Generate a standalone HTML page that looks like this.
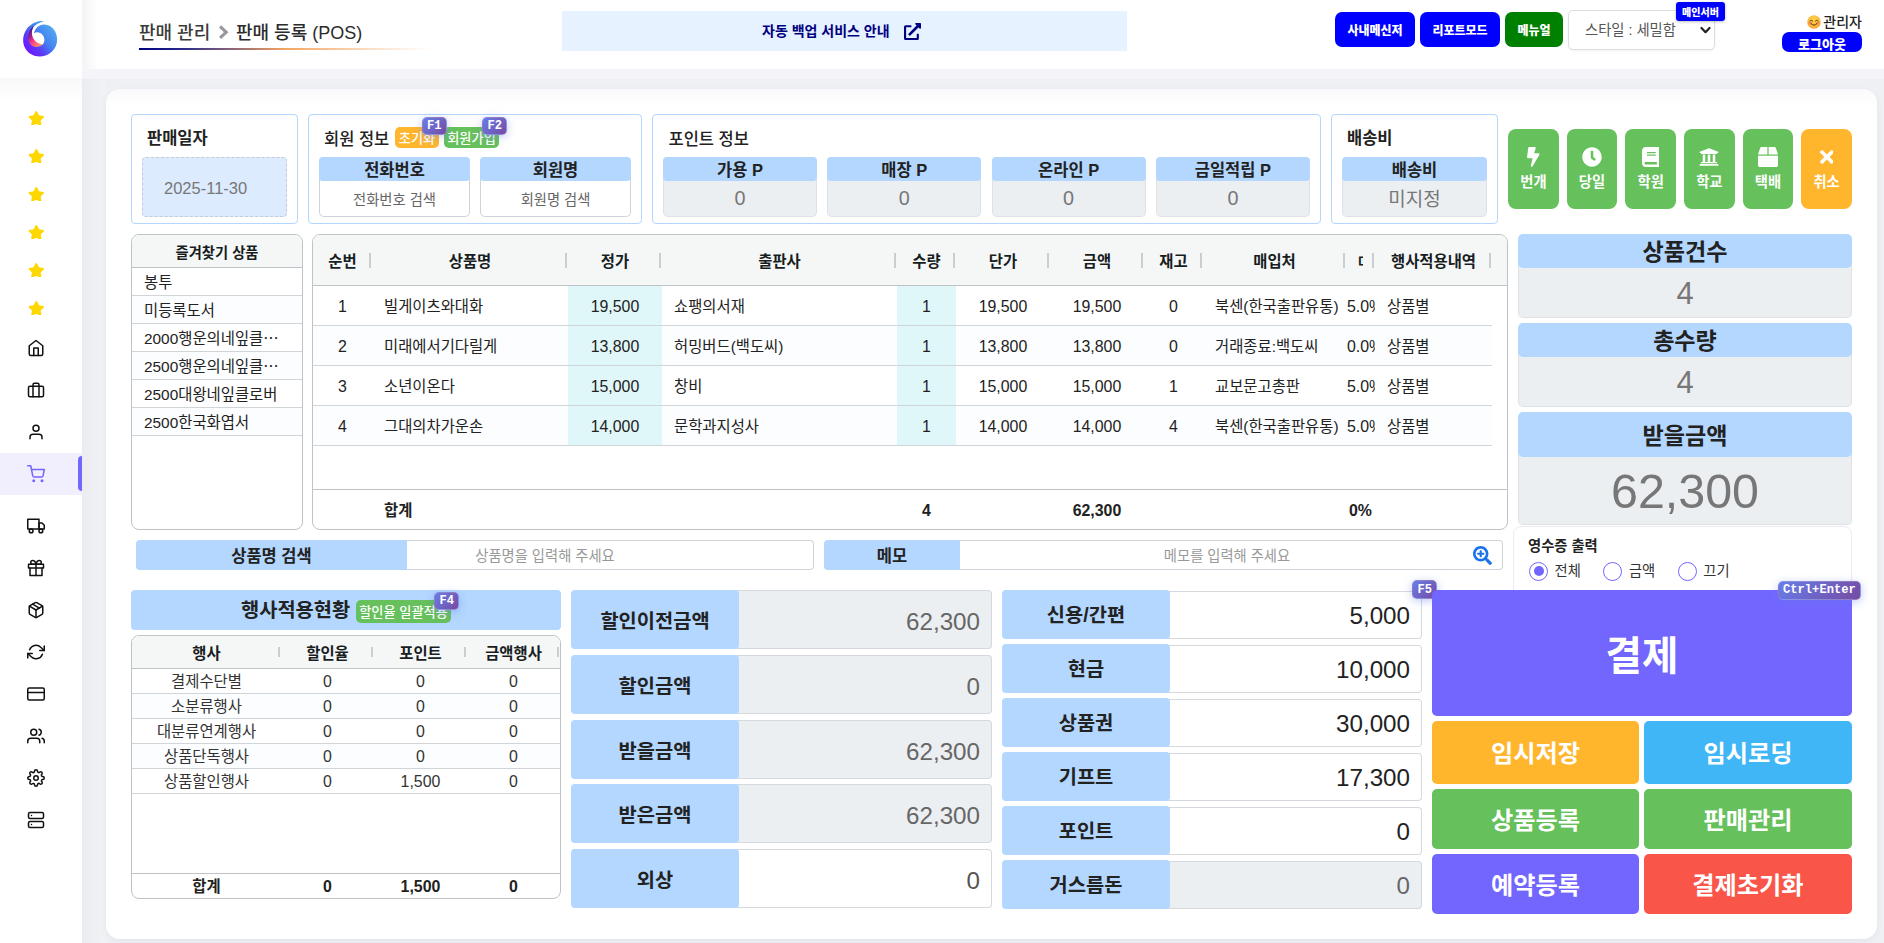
<!DOCTYPE html>
<html lang="ko"><head><meta charset="utf-8"><title>판매 등록 (POS)</title>
<style>
*{box-sizing:border-box;margin:0;padding:0}
html,body{width:1884px;height:943px;overflow:hidden}
body{position:relative;background:#eef0f4;font-family:"Liberation Sans", "Noto Sans CJK KR", sans-serif;font-size:15.4px;color:#222;-webkit-font-smoothing:antialiased}
.a{position:absolute}
.c{display:flex;align-items:center;justify-content:center;white-space:nowrap}
.b{font-weight:700}
#side{left:0;top:0;width:82px;height:943px;background:#fff}
#top{left:82px;top:0;width:1802px;height:69px;background:#fff}
#band{left:82px;top:69px;width:1802px;height:10px;background:#f4f4f9}
#card{left:106px;top:89px;width:1771px;height:850px;background:linear-gradient(180deg,#fafafc 0,#fff 18px);border-radius:14px;box-shadow:0 2px 6px rgba(90,90,130,.07)}
.ico{position:absolute;left:27px;width:18px;height:18px;fill:none;stroke:#111;stroke-width:2;stroke-linecap:round;stroke-linejoin:round}
.star{position:absolute;left:28px;width:16.600px;height:14.800px;fill:#ffd700}
.box{border:1px solid #b3d7ff;border-radius:4px;background:#fff}
.ttl{font-size:16.5px;font-weight:700;color:#222;line-height:20px;white-space:nowrap}
.fh{background:#b3d7ff;border-radius:4px;font-size:16.5px;font-weight:700;color:#222}
.fv{border:1px solid #ced4da;border-top:none;border-radius:0 0 5px 5px;background:#fff;font-size:14.3px;color:#666}
.fv.dis{background:#eceff2;border-color:#dee2e6;font-size:19.8px;color:#777}
.key{background:linear-gradient(135deg,#667eea 0%,#764ba2 100%);border:1px solid rgba(255,255,255,.22);color:#fff;font-family:"Liberation Mono", "DejaVu Sans Mono", monospace;font-weight:700;font-size:12.1px;border-radius:5px;box-shadow:0 2px 8px rgba(102,126,234,.42);letter-spacing:0}
.bdg{color:#fff;font-size:13.2px;font-weight:500;border-radius:5px}
.abtn{background:#66c05c;border-radius:8px;color:#fff}
.abtn svg{position:absolute;fill:#fff}
.abtn span{position:absolute;left:0;right:0;top:42.500px;text-align:center;font-size:14.3px;font-weight:700;line-height:20px}
.grid{border:1px solid #bdc3c7;border-radius:8px;background:#fff;overflow:hidden}
.gh{background:#f5f7f7;border-bottom:1px solid #bdc3c7}
.hl{font-weight:700;font-size:15.4px;color:#181d1f}
.sep{width:2px;background:rgba(189,195,199,.8)}
.rl{height:1px;background:#d0d5d9}
.cell{font-size:15.4px;color:#222;white-space:nowrap;overflow:hidden}
.sum .h{background:#b3d7ff;border-radius:5px;padding-bottom:2px;font-weight:700;font-size:23.1px;color:#222}
.sum .v{background:#eceff2;border:1px solid #dee2e6;border-top:none;border-radius:0 0 5px 5px;color:#777}
.pl{background:#b3d7ff;border-radius:4px;font-size:19.8px;font-weight:700;color:#222}
.pv{border:1px solid #d5d9dd;border-left:none;border-radius:0 4px 4px 0;font-size:24.2px;justify-content:flex-end;padding-right:11px;background:#fff;color:#222}
.pv.dis{background:#eceff2;color:#666}
.big{color:#fff;font-weight:700;font-size:24.2px;border-radius:5px;padding-bottom:2px}
.radio{width:19px;height:19px;border:1px solid #7366ff;border-radius:50%;background:#fff}
.tb{color:#fff;font-weight:900;font-size:12px;border-radius:7px}
</style></head>
<body>
<div id="side" class="a">
<svg class="a" style="left:15px;top:14px" width="50" height="50" viewBox="0 0 943 943">
<defs><linearGradient id="lg1" x1="0.92" y1="0.22" x2="0.2" y2="0.85"><stop offset="0" stop-color="#52aaf0"/><stop offset="0.45" stop-color="#4480f2"/><stop offset="0.75" stop-color="#5a3cf8"/><stop offset="1" stop-color="#6a1eff"/></linearGradient>
<linearGradient id="lg2" x1="0.2" y1="0" x2="0.8" y2="1"><stop offset="0" stop-color="#3a1290"/><stop offset="0.35" stop-color="#a0208a"/><stop offset="0.6" stop-color="#ff3f88"/><stop offset="1" stop-color="#ffa25a"/></linearGradient></defs>
<path d="M545,135 C440,122 300,170 215,290 C150,385 130,520 190,640 C250,750 360,805 480,800 C660,795 795,650 795,480 C795,330 690,205 560,200 C470,198 390,250 358,362 C400,335 480,340 525,400 C570,460 560,540 520,575 C470,615 390,600 340,540 C290,470 300,330 345,250 C390,190 470,160 545,135 Z" fill="url(#lg1)"/>
<path d="M338,232 C262,310 232,420 262,520 C298,625 420,665 530,568 C450,578 370,520 335,440 C308,380 312,300 348,240 Z" fill="url(#lg2)"/>
</svg>
<svg class="star" style="top:110.5px" viewBox="0 0 576 512"><path d="M259.3 17.8L194 150.2 47.9 171.5c-26.2 3.8-36.7 36.1-17.700 54.600l105.700 103-25 145.500c-4.500 26.300 23.200 46 46.400 33.700L288 439.600l130.700 68.700c23.200 12.200 50.900-7.400 46.400-33.700l-25-145.500 105.700-103c19-18.500 8.500-50.800-17.700-54.600L382 150.200 316.700 17.800c-11.700-23.600-45.600-23.900-57.400 0z"/></svg>
<svg class="star" style="top:148.5px" viewBox="0 0 576 512"><path d="M259.3 17.8L194 150.2 47.9 171.5c-26.2 3.8-36.7 36.1-17.700 54.600l105.700 103-25 145.500c-4.500 26.300 23.200 46 46.400 33.700L288 439.600l130.700 68.700c23.200 12.200 50.900-7.400 46.400-33.700l-25-145.500 105.700-103c19-18.500 8.500-50.800-17.700-54.600L382 150.200 316.700 17.800c-11.700-23.600-45.600-23.900-57.400 0z"/></svg>
<svg class="star" style="top:186.5px" viewBox="0 0 576 512"><path d="M259.3 17.8L194 150.2 47.9 171.5c-26.2 3.8-36.7 36.1-17.700 54.600l105.700 103-25 145.500c-4.500 26.300 23.200 46 46.400 33.700L288 439.600l130.700 68.700c23.200 12.200 50.900-7.400 46.400-33.700l-25-145.500 105.700-103c19-18.500 8.500-50.800-17.700-54.600L382 150.200 316.700 17.800c-11.700-23.600-45.600-23.900-57.400 0z"/></svg>
<svg class="star" style="top:224.5px" viewBox="0 0 576 512"><path d="M259.3 17.8L194 150.2 47.9 171.5c-26.2 3.8-36.7 36.1-17.700 54.600l105.700 103-25 145.500c-4.500 26.300 23.200 46 46.400 33.700L288 439.600l130.700 68.700c23.200 12.200 50.900-7.400 46.400-33.700l-25-145.500 105.700-103c19-18.500 8.500-50.800-17.700-54.600L382 150.200 316.700 17.800c-11.700-23.600-45.600-23.900-57.400 0z"/></svg>
<svg class="star" style="top:262.5px" viewBox="0 0 576 512"><path d="M259.3 17.8L194 150.2 47.9 171.5c-26.2 3.8-36.7 36.1-17.700 54.600l105.700 103-25 145.500c-4.500 26.300 23.200 46 46.400 33.700L288 439.600l130.700 68.700c23.200 12.200 50.900-7.400 46.400-33.700l-25-145.500 105.700-103c19-18.500 8.500-50.800-17.700-54.600L382 150.200 316.700 17.800c-11.700-23.600-45.600-23.900-57.400 0z"/></svg>
<svg class="star" style="top:300.5px" viewBox="0 0 576 512"><path d="M259.3 17.8L194 150.2 47.9 171.5c-26.2 3.8-36.7 36.1-17.700 54.600l105.700 103-25 145.500c-4.500 26.300 23.200 46 46.400 33.700L288 439.600l130.700 68.700c23.200 12.200 50.900-7.400 46.400-33.700l-25-145.500 105.700-103c19-18.500 8.500-50.800-17.700-54.600L382 150.200 316.700 17.800c-11.700-23.600-45.600-23.900-57.400 0z"/></svg>
<div class="a " style="left:0px;top:453px;width:82px;height:42px;background:#f1effd"></div>
<div class="a " style="left:78px;top:456px;width:4px;height:35px;background:#7366ff;border-radius:4px 0 0 4px"></div>
<svg class="ico" style="top:339px;" viewBox="0 0 24 24"><path d="M3 9l9-7 9 7v11a2 2 0 0 1-2 2H5a2 2 0 0 1-2-2z"/><polyline points="9 22 9 12 15 12 15 22"/></svg>
<svg class="ico" style="top:381px;" viewBox="0 0 24 24"><rect x="2" y="7" width="20" height="14" rx="2" ry="2"/><path d="M16 21V5a2 2 0 0 0-2-2h-4a2 2 0 0 0-2 2v16"/></svg>
<svg class="ico" style="top:423px;" viewBox="0 0 24 24"><path d="M20 21v-2a4 4 0 0 0-4-4H8a4 4 0 0 0-4 4v2"/><circle cx="12" cy="7" r="4"/></svg>
<svg class="ico" style="top:465px;stroke:#7366ff;" viewBox="0 0 24 24"><circle cx="9" cy="21" r="1"/><circle cx="20" cy="21" r="1"/><path d="M1 1h4l2.680 13.390a2 2 0 0 0 2 1.610h9.720a2 2 0 0 0 2-1.610L23 6H6"/></svg>
<svg class="ico" style="top:517px;" viewBox="0 0 24 24"><rect x="1" y="3" width="15" height="13"/><polygon points="16 8 20 8 23 11 23 16 16 16 16 8"/><circle cx="5.500" cy="18.500" r="2.500"/><circle cx="18.500" cy="18.500" r="2.500"/></svg>
<svg class="ico" style="top:559px;" viewBox="0 0 24 24"><polyline points="20 12 20 22 4 22 4 12"/><rect x="2" y="7" width="20" height="5"/><line x1="12" y1="22" x2="12" y2="7"/><path d="M12 7H7.500a2.500 2.500 0 0 1 0-5C11 2 12 7 12 7z"/><path d="M12 7h4.500a2.500 2.500 0 0 0 0-5C13 2 12 7 12 7z"/></svg>
<svg class="ico" style="top:601px;" viewBox="0 0 24 24"><line x1="16.500" y1="9.400" x2="7.500" y2="4.210"/><path d="M21 16V8a2 2 0 0 0-1-1.730l-7-4a2 2 0 0 0-2 0l-7 4A2 2 0 0 0 3 8v8a2 2 0 0 0 1 1.730l7 4a2 2 0 0 0 2 0l7-4A2 2 0 0 0 21 16z"/><polyline points="3.270 6.960 12 12.010 20.730 6.960"/><line x1="12" y1="22.080" x2="12" y2="12"/></svg>
<svg class="ico" style="top:643px;" viewBox="0 0 24 24"><polyline points="23 4 23 10 17 10"/><polyline points="1 20 1 14 7 14"/><path d="M3.510 9a9 9 0 0 1 14.850-3.360L23 10M1 14l4.640 4.360A9 9 0 0 0 20.490 15"/></svg>
<svg class="ico" style="top:685px;" viewBox="0 0 24 24"><rect x="1" y="4" width="22" height="16" rx="2" ry="2"/><line x1="1" y1="10" x2="23" y2="10"/></svg>
<svg class="ico" style="top:727px;" viewBox="0 0 24 24"><path d="M17 21v-2a4 4 0 0 0-4-4H5a4 4 0 0 0-4 4v2"/><circle cx="9" cy="7" r="4"/><path d="M23 21v-2a4 4 0 0 0-3-3.870"/><path d="M16 3.130a4 4 0 0 1 0 7.750"/></svg>
<svg class="ico" style="top:769px;" viewBox="0 0 24 24"><circle cx="12" cy="12" r="3"/><path d="M19.400 15a1.650 1.650 0 0 0 .330 1.820l.060.060a2 2 0 0 1 0 2.830 2 2 0 0 1-2.830 0l-.060-.060a1.650 1.650 0 0 0-1.820-.330 1.650 1.650 0 0 0-1 1.510V21a2 2 0 0 1-2 2 2 2 0 0 1-2-2v-.090A1.650 1.650 0 0 0 9 19.400a1.650 1.650 0 0 0-1.820.330l-.060.060a2 2 0 0 1-2.830 0 2 2 0 0 1 0-2.830l.060-.060a1.650 1.650 0 0 0 .330-1.820 1.650 1.650 0 0 0-1.510-1H3a2 2 0 0 1-2-2 2 2 0 0 1 2-2h.090A1.650 1.650 0 0 0 4.600 9a1.650 1.650 0 0 0-.330-1.820l-.060-.060a2 2 0 0 1 0-2.830 2 2 0 0 1 2.830 0l.060.060a1.650 1.650 0 0 0 1.820.330H9a1.650 1.650 0 0 0 1-1.510V3a2 2 0 0 1 2-2 2 2 0 0 1 2 2v.090a1.650 1.650 0 0 0 1 1.510 1.650 1.650 0 0 0 1.820-.330l.060-.060a2 2 0 0 1 2.830 0 2 2 0 0 1 0 2.830l-.060.060a1.650 1.650 0 0 0-.330 1.820V9a1.650 1.650 0 0 0 1.510 1H21a2 2 0 0 1 2 2 2 2 0 0 1-2 2h-.090a1.650 1.650 0 0 0-1.510 1z"/></svg>
<svg class="ico" style="top:811px;" viewBox="0 0 24 24"><rect x="2" y="2" width="20" height="8" rx="2" ry="2"/><rect x="2" y="14" width="20" height="8" rx="2" ry="2"/><line x1="6" y1="6" x2="6.010" y2="6"/><line x1="6" y1="18" x2="6.010" y2="18"/></svg>
</div>
<div id="top" class="a"></div><div id="band" class="a"></div>
<div class="a " style="left:82px;top:0px;width:16px;height:69px;background:linear-gradient(90deg,#f3f3f6,#fff)"></div>
<div class="a " style="left:0px;top:78px;width:82px;height:22px;background:linear-gradient(180deg,#f8f8fa,#fff)"></div>
<div class="a" style="left:139px;top:18.500px;height:28px;line-height:28px;font-size:18px;font-weight:500;color:#3a3a3a;white-space:nowrap">판매 관리</div>
<svg class="a" style="left:217px;top:24px" width="13" height="17" viewBox="0 0 13 17"><path d="M3.100 2.500 L9.200 8.200 L3.100 13.900" fill="none" stroke="#999" stroke-width="3.100" stroke-linejoin="miter" stroke-linecap="butt"/></svg>
<div class="a" style="left:236px;top:18.500px;height:28px;line-height:28px;font-size:18px;font-weight:500;color:#2b2b2b;white-space:nowrap">판매 등록 (POS)</div>
<div class="a " style="left:139px;top:48px;width:292px;height:2px;background:linear-gradient(90deg,#000080 0%,#2a2a8c 15%,#f4a460 50%,rgba(244,164,96,.35) 80%,rgba(244,164,96,0) 100%)"></div>
<div class="a " style="left:562px;top:11px;width:565px;height:40px;background:#e6f2ff"></div>
<div class="a b" style="left:762px;top:21px;line-height:20px;font-size:14px;color:#000080;white-space:nowrap">자동 백업 서비스 안내</div>
<svg class="a" style="left:904px;top:23px;fill:#000080" width="17" height="17" viewBox="0 0 512 512"><path d="M432,320H400a16,16,0,0,0-16,16V448H64V128H208a16,16,0,0,0,16-16V80a16,16,0,0,0-16-16H48A48,48,0,0,0,0,112V464a48,48,0,0,0,48,48H400a48,48,0,0,0,48-48V336A16,16,0,0,0,432,320ZM488,0h-128c-21.370,0-32.050,25.910-17,41l35.730,35.730L135,320.370a24,24,0,0,0,0,34L157.670,377a24,24,0,0,0,34,0L435.280,133.320,471,169c15,15,41,4.500,41-17V24A24,24,0,0,0,488,0Z"/></svg>
<div class="a c tb" style="left:1335px;top:12px;width:80px;height:35px;background:#0000ff">사내메신저</div>
<div class="a c tb" style="left:1420px;top:12px;width:80px;height:35px;background:#0000ff">리포트모드</div>
<div class="a c tb" style="left:1505px;top:12px;width:58px;height:35px;background:#008000">메뉴얼</div>
<div class="a " style="left:1568px;top:10px;width:147px;height:40px;border:1px solid #ddd;border-radius:5px;background:#fff;box-shadow:0 1px 3px rgba(0,0,0,.06)"></div>
<div class="a" style="left:1585px;top:19px;line-height:22px;font-size:14.3px;color:#555;white-space:nowrap">스타일 : 세밀함</div>
<svg class="a" style="left:1700px;top:26px" width="11" height="9" viewBox="0 0 11 9"><path d="M1.500 2 L5.500 6.200 L9.500 2" fill="none" stroke="#222" stroke-width="2.200" stroke-linecap="round" stroke-linejoin="round"/></svg>
<div class="a c" style="left:1676px;top:2px;width:49px;height:19px;background:#0000ff;color:#fff;font-size:10px;font-weight:900;border-radius:3px;box-shadow:0 1px 3px rgba(0,0,0,.25)">메인서버</div>
<div class="a" style="right:22px;top:12px;line-height:20px;font-size:14px;font-weight:500;color:#222;white-space:nowrap"><svg style="vertical-align:-2px;margin-right:2.500px" width="14" height="14" viewBox="0 0 14 14"><defs><radialGradient id="em" cx="0.5" cy="0.35" r="0.75"><stop offset="0" stop-color="#ffd64a"/><stop offset="0.7" stop-color="#fbb03b"/><stop offset="1" stop-color="#f2902c"/></radialGradient></defs><circle cx="7" cy="7" r="6.800" fill="url(#em)"/><ellipse cx="3.300" cy="8.300" rx="1.700" ry="1.200" fill="#f4745c" opacity=".7"/><ellipse cx="10.700" cy="8.300" rx="1.700" ry="1.200" fill="#f4745c" opacity=".7"/><path d="M2.900 6 Q4.300 4.300 5.700 6 M8.300 6 Q9.700 4.300 11.100 6" fill="none" stroke="#5b3a12" stroke-width="1" stroke-linecap="round"/><path d="M4 8.600 Q7 11.800 10 8.600" fill="none" stroke="#5b3a12" stroke-width="1" stroke-linecap="round"/></svg>관리자</div>
<div class="a c" style="left:1782px;top:32px;width:80px;height:20px;background:#0000ff;color:#fff;font-size:13px;font-weight:900;border-radius:7px;padding-top:3px">로그아웃</div>
<div class="a " style="left:82px;top:79px;width:24px;height:864px;background:linear-gradient(90deg,#ebecf0,#f1f2f5)"></div>
<div id="card" class="a"></div>
<div class="a box" style="left:131px;top:114px;width:167px;height:110px;"></div>
<div class="a ttl" style="left:147px;top:128px">판매일자</div>
<div class="a " style="left:142px;top:157px;width:145px;height:60px;background:#ddebfe;border:1px dashed #c6cbd3;border-radius:4px"></div>
<div class="a" style="left:164px;top:178px;line-height:20px;font-size:16.5px;color:#777">2025-11-30</div>
<div class="a box" style="left:308px;top:114px;width:334px;height:110px;"></div>
<div class="a ttl" style="left:324px;top:128.500px;font-weight:500">회원 정보</div>
<div class="a c bdg" style="left:395px;top:127px;width:44px;height:21px;background:#ffb52c">초기화</div>
<div class="a c bdg" style="left:444px;top:127px;width:55px;height:21px;background:#66c05c">회원가입</div>
<div class="a c key" style="left:421.5px;top:117px;width:25.3px;height:18.3px;">F1</div>
<div class="a c key" style="left:482px;top:117px;width:25.3px;height:18.3px;">F2</div>
<div class="a c fv" style="left:319px;top:176px;width:151px;height:41px;padding-top:5px;">전화번호 검색</div>
<div class="a c fh" style="left:319px;top:157px;width:151px;height:24px;">전화번호</div>
<div class="a c fv" style="left:480px;top:176px;width:151px;height:41px;padding-top:5px;">회원명 검색</div>
<div class="a c fh" style="left:480px;top:157px;width:151px;height:24px;">회원명</div>
<div class="a box" style="left:652px;top:114px;width:669px;height:110px;"></div>
<div class="a ttl" style="left:668.500px;top:128.500px;font-weight:500">포인트 정보</div>
<div class="a c fv dis" style="left:663px;top:176px;width:154px;height:41px;padding-top:5px;">0</div>
<div class="a c fh" style="left:663px;top:157px;width:154px;height:24px;">가용 P</div>
<div class="a c fv dis" style="left:827.3px;top:176px;width:154px;height:41px;padding-top:5px;">0</div>
<div class="a c fh" style="left:827.3px;top:157px;width:154px;height:24px;">매장 P</div>
<div class="a c fv dis" style="left:991.6px;top:176px;width:154px;height:41px;padding-top:5px;">0</div>
<div class="a c fh" style="left:991.6px;top:157px;width:154px;height:24px;">온라인 P</div>
<div class="a c fv dis" style="left:1155.9px;top:176px;width:154px;height:41px;padding-top:5px;">0</div>
<div class="a c fh" style="left:1155.9px;top:157px;width:154px;height:24px;">금일적립 P</div>
<div class="a box" style="left:1331px;top:114px;width:167px;height:110px;"></div>
<div class="a ttl" style="left:1347px;top:128px">배송비</div>
<div class="a c fv dis" style="left:1342px;top:176px;width:145px;height:41px;padding-top:5px;font-size:19px;padding-top:3px">미지정</div>
<div class="a c fh" style="left:1342px;top:157px;width:145px;height:24px;">배송비</div>
<div class="a abtn" style="left:1508px;top:129px;width:50.800px;height:80px;background:#66c05c"><svg style="left:19.1px;top:18px" width="12.5" height="20" viewBox="0 0 320 512"><path d="M296 160H180.600l42.600-129.800C227.200 15 215.700 0 200 0H56C44 0 33.800 8.900 32.200 20.800l-32 240C-1.700 275.200 9.500 288 24 288h118.700L96.600 482.500c-3.600 15.200 8 29.500 23.300 29.500 8.400 0 16.400-4.400 20.800-12l176-304c9.300-15.900-2.200-36-20.700-36z"/></svg><span>번개</span></div>
<div class="a abtn" style="left:1566.64px;top:129px;width:50.800px;height:80px;background:#66c05c"><svg style="left:15.35px;top:18px" width="20" height="20" viewBox="0 0 512 512"><path d="M256,8C119,8,8,119,8,256S119,504,256,504,504,393,504,256,393,8,256,8Zm92.490,313h0l-20,25a16,16,0,0,1-22.490,2.500h0l-67-49.720a40,40,0,0,1-15-31.230V112a16,16,0,0,1,16-16h32a16,16,0,0,1,16,16V256l58,42.500A16,16,0,0,1,348.490,321Z"/></svg><span>당일</span></div>
<div class="a abtn" style="left:1625.28px;top:129px;width:50.800px;height:80px;background:#66c05c"><svg style="left:16.6px;top:18px" width="17.5" height="20" viewBox="0 0 448 512"><path d="M448 360V24c0-13.300-10.700-24-24-24H96C43 0 0 43 0 96v320c0 53 43 96 96 96h328c13.300 0 24-10.700 24-24v-16c0-7.500-3.500-14.300-8.900-18.700-4.200-15.400-4.200-59.300 0-74.700 5.400-4.300 8.900-11.100 8.900-18.600zM128 134c0-3.300 2.700-6 6-6h212c3.300 0 6 2.700 6 6v20c0 3.300-2.700 6-6 6H134c-3.300 0-6-2.700-6-6v-20zm0 64c0-3.300 2.700-6 6-6h212c3.300 0 6 2.700 6 6v20c0 3.300-2.700 6-6 6H134c-3.300 0-6-2.700-6-6v-20zm253.400 250H96c-17.700 0-32-14.300-32-32 0-17.600 14.400-32 32-32h285.400c-1.900 17.100-1.900 46.900 0 64z"/></svg><span>학원</span></div>
<div class="a abtn" style="left:1683.92px;top:129px;width:50.800px;height:80px;background:#66c05c"><svg style="left:15.35px;top:18px" width="20" height="20" viewBox="0 0 512 512"><path d="M496 128v16a8 8 0 0 1-8 8h-24v12c0 6.627-5.373 12-12 12H60c-6.627 0-12-5.373-12-12v-12H24a8 8 0 0 1-8-8v-16a8 8 0 0 1 4.941-7.392l232-88a7.996 7.996 0 0 1 6.118 0l232 88A8 8 0 0 1 496 128zm-24 304H40c-13.255 0-24 10.745-24 24v16a8 8 0 0 0 8 8h464a8 8 0 0 0 8-8v-16c0-13.255-10.745-24-24-24zM96 192v192H60c-6.627 0-12 5.373-12 12v20h416v-20c0-6.627-5.373-12-12-12h-36V192h-64v192h-64V192h-64v192h-64V192H96z"/></svg><span>학교</span></div>
<div class="a abtn" style="left:1742.56px;top:129px;width:50.800px;height:80px;background:#66c05c"><svg style="left:15.35px;top:18px" width="20" height="20" viewBox="0 0 512 512"><path d="M509.500 184.600L458.900 32.800C452.400 13.200 434.100 0 413.400 0H272v192h238.700c-.4-2.500-.4-5-1.200-7.400zM240 0H98.600c-20.700 0-39 13.200-45.500 32.800L2.500 184.600c-.8 2.400-.8 4.900-1.200 7.400H240V0zM0 224v240c0 26.500 21.500 48 48 48h416c26.500 0 48-21.500 48-48V224H0z"/></svg><span>택배</span></div>
<div class="a abtn" style="left:1801.2px;top:129px;width:50.800px;height:80px;background:#ffb52c"><svg style="left:18.475px;top:18px" width="13.75" height="20" viewBox="0 0 352 512"><path d="M242.720 256l100.070-100.070c12.280-12.280 12.280-32.190 0-44.480l-22.240-22.240c-12.280-12.280-32.190-12.280-44.480 0L176 189.280 75.930 89.210c-12.280-12.280-32.190-12.280-44.480 0L9.210 111.450c-12.280 12.280-12.280 32.190 0 44.480L109.280 256 9.210 356.070c-12.280 12.280-12.280 32.190 0 44.480l22.240 22.240c12.280 12.280 32.200 12.280 44.480 0L176 322.720l100.070 100.070c12.280 12.280 32.200 12.280 44.480 0l22.240-22.240c12.280-12.280 12.280-32.190 0-44.480L242.720 256z"/></svg><span>취소</span></div>
<div class="a grid" style="left:131px;top:234px;width:172px;height:296px">
<div class="a gh c hl" style="left:0px;top:0px;width:170px;height:33px;font-size:14.3px">즐겨찾기 상품</div>
<div class="a cell" style="left:0px;top:33px;width:170px;height:28px;background:#fff;border-bottom:1px solid #d0d5d9;padding-left:12px;line-height:29px">봉투</div>
<div class="a cell" style="left:0px;top:61px;width:170px;height:28px;background:#fcfdfe;border-bottom:1px solid #d0d5d9;padding-left:12px;line-height:29px">미등록도서</div>
<div class="a cell" style="left:0px;top:89px;width:170px;height:28px;background:#fff;border-bottom:1px solid #d0d5d9;padding-left:12px;line-height:29px">2000행운의네잎클⋯</div>
<div class="a cell" style="left:0px;top:117px;width:170px;height:28px;background:#fcfdfe;border-bottom:1px solid #d0d5d9;padding-left:12px;line-height:29px">2500행운의네잎클⋯</div>
<div class="a cell" style="left:0px;top:145px;width:170px;height:28px;background:#fff;border-bottom:1px solid #d0d5d9;padding-left:12px;line-height:29px">2500대왕네잎클로버</div>
<div class="a cell" style="left:0px;top:173px;width:170px;height:28px;background:#fcfdfe;border-bottom:1px solid #d0d5d9;padding-left:12px;line-height:29px">2500한국화엽서</div>
</div>
<div class="a grid" style="left:312px;top:234px;width:1196px;height:296px">
<div class="a gh" style="left:0px;top:0px;width:1194px;height:51px;"></div>
<div class="a hl c" style="left:0px;top:0px;width:59px;height:50px;">순번</div>
<div class="a sep" style="left:56px;top:18px;width:2px;height:15px;"></div>
<div class="a hl c" style="left:59px;top:0px;width:196px;height:50px;">상품명</div>
<div class="a sep" style="left:252px;top:18px;width:2px;height:15px;"></div>
<div class="a hl c" style="left:255px;top:0px;width:94px;height:50px;">정가</div>
<div class="a sep" style="left:346px;top:18px;width:2px;height:15px;"></div>
<div class="a hl c" style="left:349px;top:0px;width:235px;height:50px;">출판사</div>
<div class="a sep" style="left:581px;top:18px;width:2px;height:15px;"></div>
<div class="a hl c" style="left:584px;top:0px;width:59px;height:50px;">수량</div>
<div class="a sep" style="left:640px;top:18px;width:2px;height:15px;"></div>
<div class="a hl c" style="left:643px;top:0px;width:94px;height:50px;">단가</div>
<div class="a sep" style="left:734px;top:18px;width:2px;height:15px;"></div>
<div class="a hl c" style="left:737px;top:0px;width:94px;height:50px;">금액</div>
<div class="a sep" style="left:828px;top:18px;width:2px;height:15px;"></div>
<div class="a hl c" style="left:831px;top:0px;width:59px;height:50px;">재고</div>
<div class="a sep" style="left:887px;top:18px;width:2px;height:15px;"></div>
<div class="a hl c" style="left:890px;top:0px;width:143px;height:50px;">매입처</div>
<div class="a sep" style="left:1030px;top:18px;width:2px;height:15px;"></div>
<div class="a hl" style="left:1045px;top:0px;width:5px;height:50px;line-height:55px;font-size:14px;overflow:hidden;white-space:nowrap">마진</div>
<div class="a sep" style="left:1059px;top:18px;width:2px;height:15px;"></div>
<div class="a hl c" style="left:1062px;top:0px;width:117px;height:50px;">행사적용내역</div>
<div class="a sep" style="left:1176px;top:18px;width:2px;height:15px;"></div>
<div class="a " style="left:0px;top:51px;width:1179px;height:39px;background:#fff"></div>
<div class="a rl" style="left:0px;top:90px;width:1179px;height:1px;"></div>
<div class="a cell" style="left:0px;top:51px;width:59px;height:39px;line-height:41px;text-align:center;font-size:15.9px;">1</div>
<div class="a cell" style="left:59px;top:51px;width:196px;height:39px;line-height:41px;padding-left:12px;">빌게이츠와대화</div>
<div class="a cell" style="left:255px;top:51px;width:94px;height:39px;line-height:41px;background:#e0f7fa;text-align:center;font-size:15.9px;">19,500</div>
<div class="a cell" style="left:349px;top:51px;width:235px;height:39px;line-height:41px;padding-left:12px;">쇼팽의서재</div>
<div class="a cell" style="left:584px;top:51px;width:59px;height:39px;line-height:41px;background:#e0f7fa;text-align:center;font-size:15.9px;">1</div>
<div class="a cell" style="left:643px;top:51px;width:94px;height:39px;line-height:41px;text-align:center;font-size:15.9px;">19,500</div>
<div class="a cell" style="left:737px;top:51px;width:94px;height:39px;line-height:41px;text-align:center;font-size:15.9px;">19,500</div>
<div class="a cell" style="left:831px;top:51px;width:59px;height:39px;line-height:41px;text-align:center;font-size:15.9px;">0</div>
<div class="a cell" style="left:890px;top:51px;width:143px;height:39px;line-height:41px;padding-left:12px;">북센(한국출판유통)</div>
<div class="a cell" style="left:1033px;top:51px;width:29px;height:39px;line-height:41px;text-align:center;padding-left:1px;font-size:15.9px;">5.0%</div>
<div class="a cell" style="left:1062px;top:51px;width:117px;height:39px;line-height:41px;padding-left:12px;">상품별</div>
<div class="a " style="left:0px;top:91px;width:1179px;height:39px;background:#fcfdfe"></div>
<div class="a rl" style="left:0px;top:130px;width:1179px;height:1px;"></div>
<div class="a cell" style="left:0px;top:91px;width:59px;height:39px;line-height:41px;text-align:center;font-size:15.9px;">2</div>
<div class="a cell" style="left:59px;top:91px;width:196px;height:39px;line-height:41px;padding-left:12px;">미래에서기다릴게</div>
<div class="a cell" style="left:255px;top:91px;width:94px;height:39px;line-height:41px;background:#e0f7fa;text-align:center;font-size:15.9px;">13,800</div>
<div class="a cell" style="left:349px;top:91px;width:235px;height:39px;line-height:41px;padding-left:12px;">허밍버드(백도씨)</div>
<div class="a cell" style="left:584px;top:91px;width:59px;height:39px;line-height:41px;background:#e0f7fa;text-align:center;font-size:15.9px;">1</div>
<div class="a cell" style="left:643px;top:91px;width:94px;height:39px;line-height:41px;text-align:center;font-size:15.9px;">13,800</div>
<div class="a cell" style="left:737px;top:91px;width:94px;height:39px;line-height:41px;text-align:center;font-size:15.9px;">13,800</div>
<div class="a cell" style="left:831px;top:91px;width:59px;height:39px;line-height:41px;text-align:center;font-size:15.9px;">0</div>
<div class="a cell" style="left:890px;top:91px;width:143px;height:39px;line-height:41px;padding-left:12px;">거래종료:백도씨</div>
<div class="a cell" style="left:1033px;top:91px;width:29px;height:39px;line-height:41px;text-align:center;padding-left:1px;font-size:15.9px;">0.0%</div>
<div class="a cell" style="left:1062px;top:91px;width:117px;height:39px;line-height:41px;padding-left:12px;">상품별</div>
<div class="a " style="left:0px;top:131px;width:1179px;height:39px;background:#fff"></div>
<div class="a rl" style="left:0px;top:170px;width:1179px;height:1px;"></div>
<div class="a cell" style="left:0px;top:131px;width:59px;height:39px;line-height:41px;text-align:center;font-size:15.9px;">3</div>
<div class="a cell" style="left:59px;top:131px;width:196px;height:39px;line-height:41px;padding-left:12px;">소년이온다</div>
<div class="a cell" style="left:255px;top:131px;width:94px;height:39px;line-height:41px;background:#e0f7fa;text-align:center;font-size:15.9px;">15,000</div>
<div class="a cell" style="left:349px;top:131px;width:235px;height:39px;line-height:41px;padding-left:12px;">창비</div>
<div class="a cell" style="left:584px;top:131px;width:59px;height:39px;line-height:41px;background:#e0f7fa;text-align:center;font-size:15.9px;">1</div>
<div class="a cell" style="left:643px;top:131px;width:94px;height:39px;line-height:41px;text-align:center;font-size:15.9px;">15,000</div>
<div class="a cell" style="left:737px;top:131px;width:94px;height:39px;line-height:41px;text-align:center;font-size:15.9px;">15,000</div>
<div class="a cell" style="left:831px;top:131px;width:59px;height:39px;line-height:41px;text-align:center;font-size:15.9px;">1</div>
<div class="a cell" style="left:890px;top:131px;width:143px;height:39px;line-height:41px;padding-left:12px;">교보문고총판</div>
<div class="a cell" style="left:1033px;top:131px;width:29px;height:39px;line-height:41px;text-align:center;padding-left:1px;font-size:15.9px;">5.0%</div>
<div class="a cell" style="left:1062px;top:131px;width:117px;height:39px;line-height:41px;padding-left:12px;">상품별</div>
<div class="a " style="left:0px;top:171px;width:1179px;height:39px;background:#fcfdfe"></div>
<div class="a rl" style="left:0px;top:210px;width:1179px;height:1px;"></div>
<div class="a cell" style="left:0px;top:171px;width:59px;height:39px;line-height:41px;text-align:center;font-size:15.9px;">4</div>
<div class="a cell" style="left:59px;top:171px;width:196px;height:39px;line-height:41px;padding-left:12px;">그대의차가운손</div>
<div class="a cell" style="left:255px;top:171px;width:94px;height:39px;line-height:41px;background:#e0f7fa;text-align:center;font-size:15.9px;">14,000</div>
<div class="a cell" style="left:349px;top:171px;width:235px;height:39px;line-height:41px;padding-left:12px;">문학과지성사</div>
<div class="a cell" style="left:584px;top:171px;width:59px;height:39px;line-height:41px;background:#e0f7fa;text-align:center;font-size:15.9px;">1</div>
<div class="a cell" style="left:643px;top:171px;width:94px;height:39px;line-height:41px;text-align:center;font-size:15.9px;">14,000</div>
<div class="a cell" style="left:737px;top:171px;width:94px;height:39px;line-height:41px;text-align:center;font-size:15.9px;">14,000</div>
<div class="a cell" style="left:831px;top:171px;width:59px;height:39px;line-height:41px;text-align:center;font-size:15.9px;">4</div>
<div class="a cell" style="left:890px;top:171px;width:143px;height:39px;line-height:41px;padding-left:12px;">북센(한국출판유통)</div>
<div class="a cell" style="left:1033px;top:171px;width:29px;height:39px;line-height:41px;text-align:center;padding-left:1px;font-size:15.9px;">5.0%</div>
<div class="a cell" style="left:1062px;top:171px;width:117px;height:39px;line-height:41px;padding-left:12px;">상품별</div>
<div class="a " style="left:0px;top:254px;width:1194px;height:1px;background:#bdc3c7"></div>
<div class="a cell" style="left:59px;top:255px;width:196px;height:39px;line-height:42px;font-weight:700;padding-left:12px;">합계</div>
<div class="a cell" style="left:584px;top:255px;width:59px;height:39px;line-height:42px;font-weight:700;font-size:15.9px;text-align:center;">4</div>
<div class="a cell" style="left:737px;top:255px;width:94px;height:39px;line-height:42px;font-weight:700;font-size:15.9px;text-align:center;">62,300</div>
<div class="a cell" style="left:1033px;top:255px;width:29px;height:39px;line-height:42px;font-weight:700;font-size:15.9px;text-align:center;">0%</div>
</div>
<div class="sum"><div class="a c v" style="left:1518px;top:263px;width:334px;height:55px;font-size:31px;padding-top:8px">4</div><div class="a c h" style="left:1518px;top:234px;width:334px;height:34px;">상품건수</div></div>
<div class="sum"><div class="a c v" style="left:1518px;top:352px;width:334px;height:55px;font-size:31px;padding-top:8px">4</div><div class="a c h" style="left:1518px;top:323px;width:334px;height:34px;">총수량</div></div>
<div class="sum"><div class="a c v" style="left:1518px;top:452px;width:334px;height:73px;font-size:48.4px;padding-top:5px">62,300</div><div class="a c h" style="left:1518px;top:412px;width:334px;height:45px;">받을금액</div></div>
<div class="a " style="left:1513px;top:526px;width:339px;height:80px;background:#fff;border:1px solid #ececf0;border-radius:8px"></div>
<div class="a b" style="left:1528px;top:537px;line-height:19px;font-size:14.3px;color:#222;white-space:nowrap">영수증 출력</div>
<div class="a radio" style="left:1529px;top:561.5px;width:19px;height:19px;"></div>
<div class="a " style="left:1533.5px;top:566px;width:10px;height:10px;background:#7366ff;border-radius:50%"></div>
<div class="a" style="left:1554.5px;top:562px;line-height:19px;font-size:14.3px;color:#333;white-space:nowrap">전체</div>
<div class="a radio" style="left:1603.4px;top:561.5px;width:19px;height:19px;"></div>
<div class="a" style="left:1628.9px;top:562px;line-height:19px;font-size:14.3px;color:#333;white-space:nowrap">금액</div>
<div class="a radio" style="left:1677.8px;top:561.5px;width:19px;height:19px;"></div>
<div class="a" style="left:1703.3px;top:562px;line-height:19px;font-size:14.3px;color:#333;white-space:nowrap">끄기</div>
<div class="a c" style="left:136px;top:540px;width:271px;height:30px;background:#b3d7ff;border-radius:4px 0 0 4px;font-size:16.5px;font-weight:700">상품명 검색</div>
<div class="a c" style="left:407px;top:540px;width:407px;height:30px;border:1px solid #ced4da;border-left:none;border-radius:0 4px 4px 0;font-size:14.3px;color:#999;padding-right:130px;padding-bottom:2px">상품명을 입력해 주세요</div>
<div class="a c" style="left:824px;top:540px;width:136px;height:30px;background:#b3d7ff;border-radius:4px 0 0 4px;font-size:16.5px;font-weight:700">메모</div>
<div class="a c" style="left:960px;top:540px;width:543px;height:30px;border:1px solid #ced4da;border-left:none;border-radius:0 4px 4px 0;font-size:14.3px;color:#999;padding-right:8px;padding-bottom:2px">메모를 입력해 주세요</div>
<svg class="a" style="left:1473px;top:546px;fill:#1a73e8" width="19" height="19" viewBox="0 0 512 512"><path d="M304 192v32c0 6.600-5.400 12-12 12h-56v56c0 6.600-5.400 12-12 12h-32c-6.600 0-12-5.400-12-12v-56h-56c-6.600 0-12-5.400-12-12v-32c0-6.600 5.400-12 12-12h56v-56c0-6.600 5.400-12 12-12h32c6.600 0 12 5.400 12 12v56h56c6.600 0 12 5.400 12 12zm201 284.700L476.700 505c-9.400 9.400-24.600 9.400-33.900 0L343 405.300c-4.500-4.500-7-10.600-7-17V372c-35.300 27.600-79.700 44-128 44C93.100 416 0 322.900 0 208S93.100 0 208 0s208 93.100 208 208c0 48.300-16.400 92.700-44 128h16.300c6.400 0 12.500 2.500 17 7l99.700 99.700c9.300 9.400 9.300 24.600 0 34zM344 208c0-75.200-60.800-136-136-136S72 132.800 72 208s60.800 136 136 136 136-60.800 136-136z"/></svg>
<div class="a " style="left:131px;top:590px;width:430px;height:40px;background:#b3d7ff;border-radius:4px"></div>
<div class="a b" style="left:241px;top:597px;line-height:26px;font-size:19.8px;color:#222;white-space:nowrap">행사적용현황</div>
<div class="a c bdg" style="left:356px;top:600px;width:95px;height:23px;background:#66c05c">할인율 일괄적용</div>
<div class="a c key" style="left:434px;top:591.5px;width:25.3px;height:18px;">F4</div>
<div class="a grid" style="left:131px;top:635px;width:430px;height:264px">
<div class="a gh" style="left:0px;top:0px;width:428px;height:33px;"></div>
<div class="a hl c" style="left:0px;top:0px;width:149px;height:32px;">행사</div>
<div class="a sep" style="left:146px;top:11px;width:2px;height:10px;"></div>
<div class="a hl c" style="left:149px;top:0px;width:93px;height:32px;">할인율</div>
<div class="a sep" style="left:239px;top:11px;width:2px;height:10px;"></div>
<div class="a hl c" style="left:242px;top:0px;width:93px;height:32px;">포인트</div>
<div class="a sep" style="left:332px;top:11px;width:2px;height:10px;"></div>
<div class="a hl c" style="left:335px;top:0px;width:93px;height:32px;">금액행사</div>
<div class="a sep" style="left:425px;top:11px;width:2px;height:10px;"></div>
<div class="a " style="left:0px;top:33px;width:428px;height:24px;background:#fff"></div>
<div class="a rl" style="left:0px;top:57px;width:428px;height:1px;"></div>
<div class="a cell" style="left:0px;top:33px;width:149px;height:24px;line-height:25px;text-align:center;color:#333">결제수단별</div>
<div class="a cell" style="left:149px;top:33px;width:93px;height:24px;line-height:25px;text-align:center;color:#333;font-size:15.9px">0</div>
<div class="a cell" style="left:242px;top:33px;width:93px;height:24px;line-height:25px;text-align:center;color:#333;font-size:15.9px">0</div>
<div class="a cell" style="left:335px;top:33px;width:93px;height:24px;line-height:25px;text-align:center;color:#333;font-size:15.9px">0</div>
<div class="a " style="left:0px;top:58px;width:428px;height:24px;background:#fcfdfe"></div>
<div class="a rl" style="left:0px;top:82px;width:428px;height:1px;"></div>
<div class="a cell" style="left:0px;top:58px;width:149px;height:24px;line-height:25px;text-align:center;color:#333">소분류행사</div>
<div class="a cell" style="left:149px;top:58px;width:93px;height:24px;line-height:25px;text-align:center;color:#333;font-size:15.9px">0</div>
<div class="a cell" style="left:242px;top:58px;width:93px;height:24px;line-height:25px;text-align:center;color:#333;font-size:15.9px">0</div>
<div class="a cell" style="left:335px;top:58px;width:93px;height:24px;line-height:25px;text-align:center;color:#333;font-size:15.9px">0</div>
<div class="a " style="left:0px;top:83px;width:428px;height:24px;background:#fff"></div>
<div class="a rl" style="left:0px;top:107px;width:428px;height:1px;"></div>
<div class="a cell" style="left:0px;top:83px;width:149px;height:24px;line-height:25px;text-align:center;color:#333">대분류연계행사</div>
<div class="a cell" style="left:149px;top:83px;width:93px;height:24px;line-height:25px;text-align:center;color:#333;font-size:15.9px">0</div>
<div class="a cell" style="left:242px;top:83px;width:93px;height:24px;line-height:25px;text-align:center;color:#333;font-size:15.9px">0</div>
<div class="a cell" style="left:335px;top:83px;width:93px;height:24px;line-height:25px;text-align:center;color:#333;font-size:15.9px">0</div>
<div class="a " style="left:0px;top:108px;width:428px;height:24px;background:#fcfdfe"></div>
<div class="a rl" style="left:0px;top:132px;width:428px;height:1px;"></div>
<div class="a cell" style="left:0px;top:108px;width:149px;height:24px;line-height:25px;text-align:center;color:#333">상품단독행사</div>
<div class="a cell" style="left:149px;top:108px;width:93px;height:24px;line-height:25px;text-align:center;color:#333;font-size:15.9px">0</div>
<div class="a cell" style="left:242px;top:108px;width:93px;height:24px;line-height:25px;text-align:center;color:#333;font-size:15.9px">0</div>
<div class="a cell" style="left:335px;top:108px;width:93px;height:24px;line-height:25px;text-align:center;color:#333;font-size:15.9px">0</div>
<div class="a " style="left:0px;top:133px;width:428px;height:24px;background:#fff"></div>
<div class="a rl" style="left:0px;top:157px;width:428px;height:1px;"></div>
<div class="a cell" style="left:0px;top:133px;width:149px;height:24px;line-height:25px;text-align:center;color:#333">상품할인행사</div>
<div class="a cell" style="left:149px;top:133px;width:93px;height:24px;line-height:25px;text-align:center;color:#333;font-size:15.9px">0</div>
<div class="a cell" style="left:242px;top:133px;width:93px;height:24px;line-height:25px;text-align:center;color:#333;font-size:15.9px">1,500</div>
<div class="a cell" style="left:335px;top:133px;width:93px;height:24px;line-height:25px;text-align:center;color:#333;font-size:15.9px">0</div>
<div class="a " style="left:0px;top:237px;width:428px;height:1px;background:#bdc3c7"></div>
<div class="a cell" style="left:0px;top:238px;width:149px;height:24px;line-height:26px;text-align:center;font-weight:700">합계</div>
<div class="a cell" style="left:149px;top:238px;width:93px;height:24px;line-height:26px;text-align:center;font-weight:700;font-size:15.9px">0</div>
<div class="a cell" style="left:242px;top:238px;width:93px;height:24px;line-height:26px;text-align:center;font-weight:700;font-size:15.9px">1,500</div>
<div class="a cell" style="left:335px;top:238px;width:93px;height:24px;line-height:26px;text-align:center;font-weight:700;font-size:15.9px">0</div>
</div>
<div class="a c pv dis" style="left:737px;top:590.4px;width:255px;height:59.1px;padding-top:4px;">62,300</div>
<div class="a c pl" style="left:571px;top:590.4px;width:168px;height:59.1px;">할인이전금액</div>
<div class="a c pv dis" style="left:737px;top:655.2px;width:255px;height:59.1px;padding-top:4px;">0</div>
<div class="a c pl" style="left:571px;top:655.2px;width:168px;height:59.1px;">할인금액</div>
<div class="a c pv dis" style="left:737px;top:720px;width:255px;height:59.1px;padding-top:4px;">62,300</div>
<div class="a c pl" style="left:571px;top:720px;width:168px;height:59.1px;">받을금액</div>
<div class="a c pv dis" style="left:737px;top:784.4px;width:255px;height:59.1px;padding-top:4px;">62,300</div>
<div class="a c pl" style="left:571px;top:784.4px;width:168px;height:59.1px;">받은금액</div>
<div class="a c pv" style="left:737px;top:849.2px;width:255px;height:59.1px;padding-top:4px;color:#555">0</div>
<div class="a c pl" style="left:571px;top:849.2px;width:168px;height:59.1px;">외상</div>
<div class="a c pv" style="left:1166px;top:590.5px;width:256px;height:48px;padding-top:3px">5,000</div>
<div class="a c pl" style="left:1002px;top:590px;width:168px;height:49px;padding-bottom:2px">신용/간편</div>
<div class="a c pv" style="left:1166px;top:644.5px;width:256px;height:48px;padding-top:3px">10,000</div>
<div class="a c pl" style="left:1002px;top:644px;width:168px;height:49px;padding-bottom:2px">현금</div>
<div class="a c pv" style="left:1166px;top:698.5px;width:256px;height:48px;padding-top:3px">30,000</div>
<div class="a c pl" style="left:1002px;top:698px;width:168px;height:49px;padding-bottom:2px">상품권</div>
<div class="a c pv" style="left:1166px;top:752.5px;width:256px;height:48px;padding-top:3px">17,300</div>
<div class="a c pl" style="left:1002px;top:752px;width:168px;height:49px;padding-bottom:2px">기프트</div>
<div class="a c pv" style="left:1166px;top:806.5px;width:256px;height:48px;padding-top:3px">0</div>
<div class="a c pl" style="left:1002px;top:806px;width:168px;height:49px;padding-bottom:2px">포인트</div>
<div class="a c pv dis" style="left:1166px;top:860.5px;width:256px;height:48px;padding-top:3px">0</div>
<div class="a c pl" style="left:1002px;top:860px;width:168px;height:49px;padding-bottom:2px">거스름돈</div>
<div class="a c key" style="left:1412px;top:580px;width:25.3px;height:19px;">F5</div>
<div class="a c big" style="left:1432px;top:590px;width:420px;height:126px;background:#7366ff;font-size:39.6px">결제</div>
<div class="a c big" style="left:1432px;top:721px;width:207px;height:63px;background:#ffb52c">임시저장</div>
<div class="a c big" style="left:1644px;top:721px;width:208px;height:63px;background:#40b6f6">임시로딩</div>
<div class="a c big" style="left:1432px;top:789px;width:207px;height:60px;background:#66c05c">상품등록</div>
<div class="a c big" style="left:1644px;top:789px;width:208px;height:60px;background:#66c05c">판매관리</div>
<div class="a c big" style="left:1432px;top:854px;width:207px;height:60px;background:#7366ff">예약등록</div>
<div class="a c big" style="left:1644px;top:854px;width:208px;height:60px;background:#fa5549">결제초기화</div>
<div class="a c key" style="left:1778.2px;top:581px;width:82.4px;height:18.7px;">Ctrl+Enter</div>
</body></html>
